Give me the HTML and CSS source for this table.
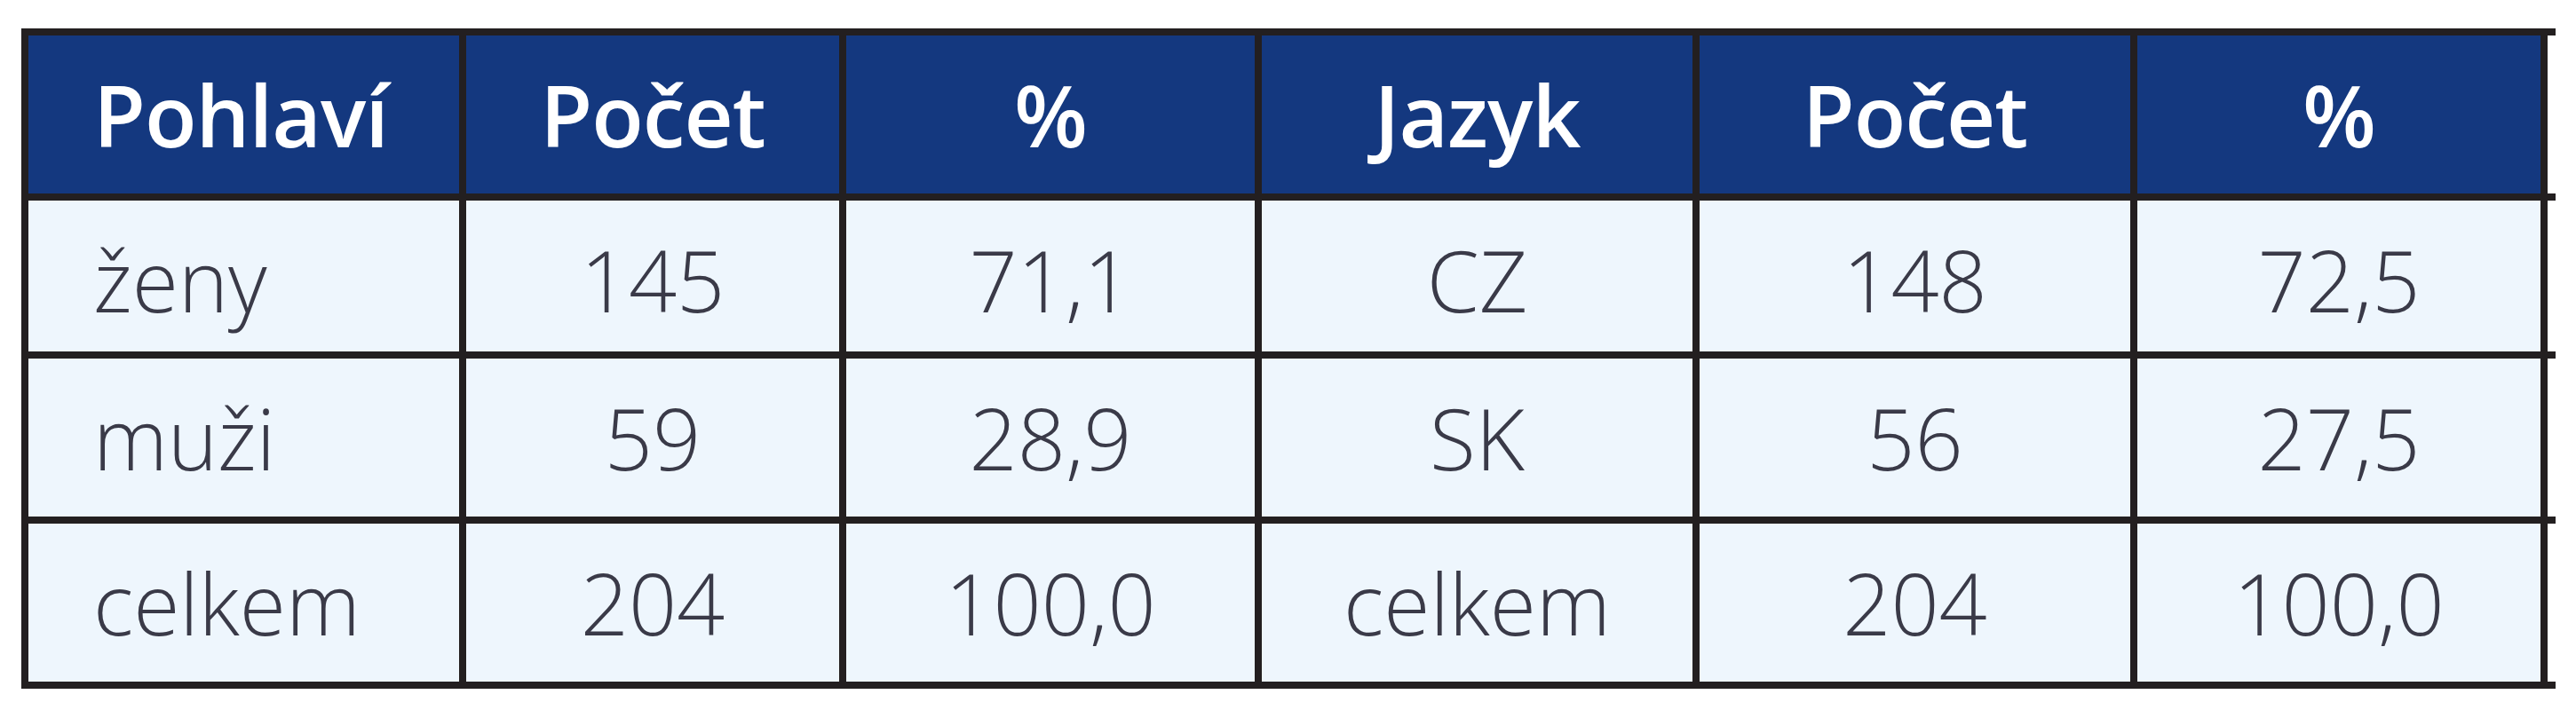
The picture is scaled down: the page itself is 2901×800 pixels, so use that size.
FILE: index.html
```html
<!DOCTYPE html>
<html lang="cs">
<head>
<meta charset="utf-8">
<title>Pohlaví a jazyk</title>
<link rel="stylesheet" href="styles.css">
</head>
<body>
<div class="page">
  <div class="table" role="table">
    <div class="row head" role="row">
      <div class="cell first" role="columnheader">Pohlaví</div>
      <div class="cell" role="columnheader">Počet</div>
      <div class="cell" role="columnheader">%</div>
      <div class="cell" role="columnheader">Jazyk</div>
      <div class="cell" role="columnheader">Počet</div>
      <div class="cell" role="columnheader">%</div>
      <div class="stub"></div>
    </div>
    <div class="row body r1" role="row">
      <div class="cell first" role="cell">ženy</div>
      <div class="cell" role="cell">145</div>
      <div class="cell" role="cell">71,1</div>
      <div class="cell" role="cell">CZ</div>
      <div class="cell" role="cell">148</div>
      <div class="cell" role="cell">72,5</div>
      <div class="stub"></div>
    </div>
    <div class="row body" role="row">
      <div class="cell first" role="cell">muži</div>
      <div class="cell" role="cell">59</div>
      <div class="cell" role="cell">28,9</div>
      <div class="cell" role="cell">SK</div>
      <div class="cell" role="cell">56</div>
      <div class="cell" role="cell">27,5</div>
      <div class="stub"></div>
    </div>
    <div class="row body" role="row">
      <div class="cell first" role="cell">celkem</div>
      <div class="cell" role="cell">204</div>
      <div class="cell" role="cell">100,0</div>
      <div class="cell" role="cell">celkem</div>
      <div class="cell" role="cell">204</div>
      <div class="cell" role="cell">100,0</div>
      <div class="stub"></div>
    </div>
  </div>
</div>
</body>
</html>
```

FILE: styles.css
```css
html, body {
  margin: 0;
  padding: 0;
  background: #ffffff;
}

.page {
  padding: 32px 0 0 24px;
}

.table {
  display: inline-grid;
  grid-template-columns: 485px 420px 460px 485px 485px 454px 9px;
  grid-template-rows: 178px 170px 178px 178px;
  column-gap: 8px;
  row-gap: 8px;
  padding: 8px 0 8px 8px;
  background: #231f20;
  font-family: "Open Sans", "Liberation Sans", sans-serif;
  line-height: 100px;
}

.row {
  display: contents;
}

.cell {
  display: flex;
  align-items: center;
  justify-content: center;
  white-space: nowrap;
}

.cell.first {
  justify-content: flex-start;
  padding-left: 73px;
}

.stub {
  background: #ffffff;
}

.head .cell {
  background: #14387f;
  color: #ffffff;
  font-size: 96px;
  font-weight: 600;
  letter-spacing: -1px;
}

.body .cell {
  background: #eef6fd;
  color: #3a3a48;
  font-size: 95px;
  font-weight: 300;
}

.r1 .cell {
  padding-top: 8px;
}
```
